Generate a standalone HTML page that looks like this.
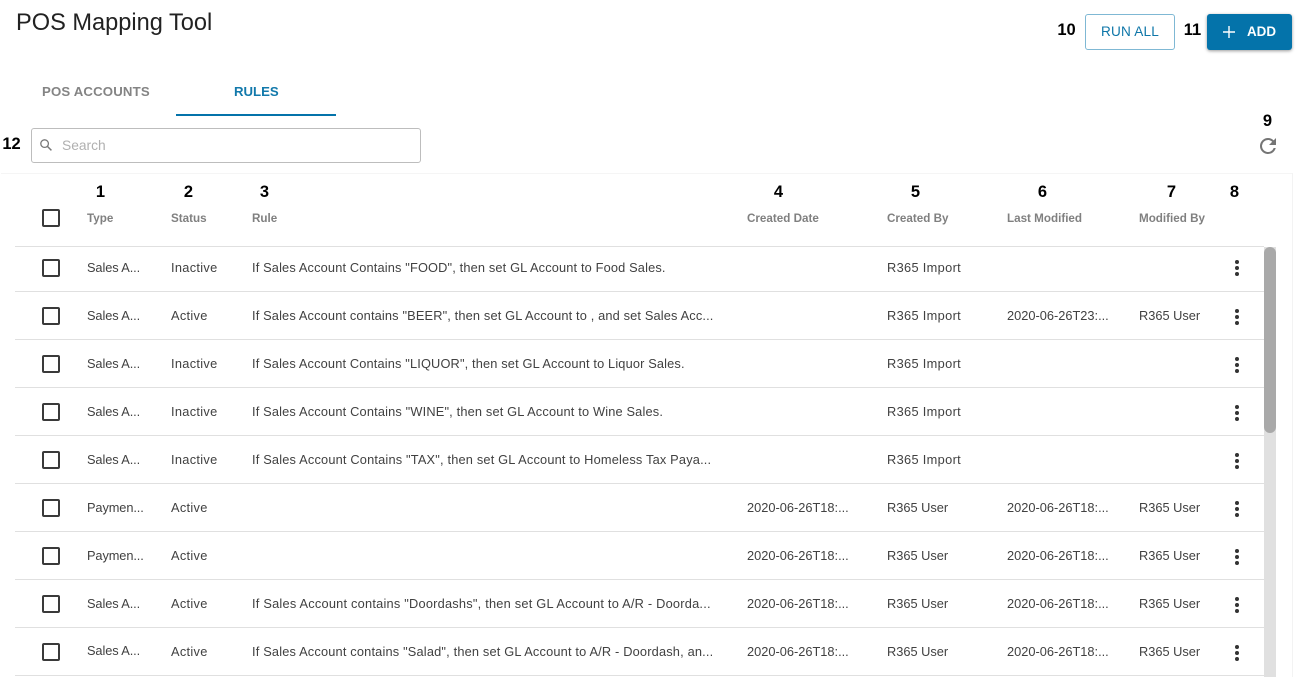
<!DOCTYPE html>
<html><head><meta charset="utf-8">
<style>
html,body{margin:0;padding:0;width:1309px;height:677px;overflow:hidden;background:#fff;font-family:"Liberation Sans",Arial,sans-serif}
.a{position:absolute;white-space:nowrap}
.t{font-size:12.8px;letter-spacing:.15px;color:#414141;line-height:16px;margin-top:1px}
.s{letter-spacing:-.1px}
.u{letter-spacing:0}
.i{letter-spacing:.33px}
.v{letter-spacing:.3px}
.h{font-size:11.65px;font-weight:700;color:#808080;line-height:16px;top:211px}
.n{font-size:16.5px;font-weight:700;color:#000;line-height:20px;text-align:center;width:30px;margin-left:-.5px}
.l{position:absolute;left:15px;width:1249px;height:1px;background:#e0e0e0}
.c{position:absolute;left:42px;width:14px;height:14px;border:2px solid #3a3a3a;border-radius:2px}
.d{position:absolute;left:1235px;width:4px}
.d i{display:block;width:4px;height:4px;border-radius:50%;background:#333;margin-bottom:2px}
</style></head><body>
<div class="a" style="left:16px;top:9px;font-size:23.6px;line-height:28px;color:#222">POS Mapping Tool</div>
<div class="a n" style="left:1052px;top:20px">10</div>
<div class="a" style="left:1085px;top:14px;width:88px;height:34px;border:1px solid #7fb8d4;border-radius:3px;text-align:center;line-height:34px;font-size:13.6px;letter-spacing:.2px;color:#0e76a8">RUN ALL</div>
<div class="a n" style="left:1178px;top:20px">11</div>
<div class="a" style="left:1207px;top:14px;width:85px;height:36px;background:#0473aa;border-radius:3px;box-shadow:0 1px 3px rgba(0,0,0,.4);color:#fff">
<svg style="position:absolute;left:15px;top:11px" width="14" height="14" viewBox="0 0 14 14"><path d="M7 1v12M1 7h12" stroke="#fff" stroke-width="1.4"/></svg>
<span style="position:absolute;left:40px;top:10px;font-size:13.4px;font-weight:700;line-height:16px">ADD</span></div>

<div class="a" style="left:42px;top:84px;font-size:13.2px;font-weight:700;color:#848484;line-height:16px;letter-spacing:.17px">POS ACCOUNTS</div>
<div class="a" style="left:234px;top:84px;font-size:13.2px;font-weight:700;color:#1279ab;line-height:16px">RULES</div>
<div class="a" style="left:176px;top:114px;width:160px;height:2px;background:#0473aa"></div>

<div class="a n" style="left:-3px;top:134px">12</div>
<div class="a" style="left:31px;top:128px;width:388px;height:33px;border:1px solid #bdbdbd;border-radius:3px"></div>
<svg class="a" style="left:39px;top:138px" width="14" height="14" viewBox="0 0 14 14"><circle cx="5.6" cy="5.6" r="3.8" fill="none" stroke="#777" stroke-width="1.3"/><path d="M8.4 8.4l4 4" stroke="#777" stroke-width="1.5"/></svg>
<div class="a" style="left:62px;top:138px;font-size:13.8px;line-height:16px;color:#b0b0b0">Search</div>

<div class="a n" style="left:1253px;top:111px">9</div>
<svg class="a" style="left:1256px;top:134px" width="24" height="24" viewBox="0 0 24 24"><path fill="#757575" d="M17.65 6.35A7.95 7.95 0 0 0 12 4a8 8 0 1 0 7.75 10h-2.08A6 6 0 1 1 12 6c1.66 0 3.14.69 4.22 1.78L13 11h7V4l-2.35 2.35z"/></svg>

<div class="a" style="left:1px;top:173px;width:1291px;height:1px;background:#f5f5f5"></div>
<div class="a" style="left:1292px;top:173px;width:1px;height:504px;background:#f3f3f3"></div>

<div class="a n" style="left:86px;top:182px">1</div>
<div class="a n" style="left:174px;top:182px">2</div>
<div class="a n" style="left:250px;top:182px">3</div>
<div class="a n" style="left:764px;top:182px">4</div>
<div class="a n" style="left:901px;top:182px">5</div>
<div class="a n" style="left:1028px;top:182px">6</div>
<div class="a n" style="left:1157px;top:182px">7</div>
<div class="a n" style="left:1220px;top:182px">8</div>

<div class="c" style="top:209px"></div>
<div class="a h" style="left:87px">Type</div>
<div class="a h" style="left:171px">Status</div>
<div class="a h" style="left:252px">Rule</div>
<div class="a h" style="left:747px">Created Date</div>
<div class="a h" style="left:887px">Created By</div>
<div class="a h" style="left:1007px">Last Modified</div>
<div class="a h" style="left:1139px">Modified By</div>

<div class="l" style="top:246px"></div>
<div class="l" style="top:291px"></div>
<div class="l" style="top:339px"></div>
<div class="l" style="top:387px"></div>
<div class="l" style="top:435px"></div>
<div class="l" style="top:483px"></div>
<div class="l" style="top:531px"></div>
<div class="l" style="top:579px"></div>
<div class="l" style="top:627px"></div>
<div class="l" style="top:675px"></div>

<div class="a" style="left:1264px;top:247px;width:12px;height:430px;background:#e0e0e0"></div>
<div class="a" style="left:1264px;top:247px;width:12px;height:186px;background:#a9a9a9;border-radius:6px"></div>

<div class="c" style="top:259px"></div><div class="a t s" style="left:87px;top:259px">Sales A...</div><div class="a t v" style="left:171px;top:259px">Inactive</div><div class="a t" style="left:252px;top:259px">If Sales Account Contains "FOOD", then set GL Account to Food Sales.</div><div class="a t i" style="left:887px;top:259px">R365 Import</div><div class="d" style="top:260px"><i></i><i></i><i></i></div>

<div class="c" style="top:307px"></div><div class="a t s" style="left:87px;top:307px">Sales A...</div><div class="a t v" style="left:171px;top:307px">Active</div><div class="a t" style="left:252px;top:307px">If Sales Account contains "BEER", then set GL Account to , and set Sales Acc...</div><div class="a t i" style="left:887px;top:307px">R365 Import</div><div class="a t u" style="left:1007px;top:307px">2020-06-26T23:...</div><div class="a t u" style="left:1139px;top:307px">R365 User</div><div class="d" style="top:309px"><i></i><i></i><i></i></div>

<div class="c" style="top:355px"></div><div class="a t s" style="left:87px;top:355px">Sales A...</div><div class="a t v" style="left:171px;top:355px">Inactive</div><div class="a t" style="left:252px;top:355px">If Sales Account Contains "LIQUOR", then set GL Account to Liquor Sales.</div><div class="a t i" style="left:887px;top:355px">R365 Import</div><div class="d" style="top:357px"><i></i><i></i><i></i></div>

<div class="c" style="top:403px"></div><div class="a t s" style="left:87px;top:403px">Sales A...</div><div class="a t v" style="left:171px;top:403px">Inactive</div><div class="a t" style="left:252px;top:403px;letter-spacing:.165px">If Sales Account Contains "WINE", then set GL Account to Wine Sales.</div><div class="a t i" style="left:887px;top:403px">R365 Import</div><div class="d" style="top:405px"><i></i><i></i><i></i></div>

<div class="c" style="top:451px"></div><div class="a t s" style="left:87px;top:451px">Sales A...</div><div class="a t v" style="left:171px;top:451px">Inactive</div><div class="a t" style="left:252px;top:451px;letter-spacing:.18px">If Sales Account Contains "TAX", then set GL Account to Homeless Tax Paya...</div><div class="a t i" style="left:887px;top:451px">R365 Import</div><div class="d" style="top:453px"><i></i><i></i><i></i></div>

<div class="c" style="top:499px"></div><div class="a t s" style="left:87px;top:499px">Paymen...</div><div class="a t v" style="left:171px;top:499px">Active</div><div class="a t u" style="left:747px;top:499px">2020-06-26T18:...</div><div class="a t u" style="left:887px;top:499px">R365 User</div><div class="a t u" style="left:1007px;top:499px">2020-06-26T18:...</div><div class="a t u" style="left:1139px;top:499px">R365 User</div><div class="d" style="top:501px"><i></i><i></i><i></i></div>

<div class="c" style="top:547px"></div><div class="a t s" style="left:87px;top:547px">Paymen...</div><div class="a t v" style="left:171px;top:547px">Active</div><div class="a t u" style="left:747px;top:547px">2020-06-26T18:...</div><div class="a t u" style="left:887px;top:547px">R365 User</div><div class="a t u" style="left:1007px;top:547px">2020-06-26T18:...</div><div class="a t u" style="left:1139px;top:547px">R365 User</div><div class="d" style="top:549px"><i></i><i></i><i></i></div>

<div class="c" style="top:595px"></div><div class="a t s" style="left:87px;top:595px">Sales A...</div><div class="a t v" style="left:171px;top:595px">Active</div><div class="a t" style="left:252px;top:595px;letter-spacing:.22px">If Sales Account contains "Doordashs", then set GL Account to A/R - Doorda...</div><div class="a t u" style="left:747px;top:595px">2020-06-26T18:...</div><div class="a t u" style="left:887px;top:595px">R365 User</div><div class="a t u" style="left:1007px;top:595px">2020-06-26T18:...</div><div class="a t u" style="left:1139px;top:595px">R365 User</div><div class="d" style="top:597px"><i></i><i></i><i></i></div>

<div class="c" style="top:643px"></div><div class="a t s" style="left:87px;top:642px">Sales A...</div><div class="a t v" style="left:171px;top:643px">Active</div><div class="a t" style="left:252px;top:643px;letter-spacing:.175px">If Sales Account contains "Salad", then set GL Account to A/R - Doordash, an...</div><div class="a t u" style="left:747px;top:643px">2020-06-26T18:...</div><div class="a t u" style="left:887px;top:643px">R365 User</div><div class="a t u" style="left:1007px;top:643px">2020-06-26T18:...</div><div class="a t u" style="left:1139px;top:643px">R365 User</div><div class="d" style="top:645px"><i></i><i></i><i></i></div>
</body></html>
